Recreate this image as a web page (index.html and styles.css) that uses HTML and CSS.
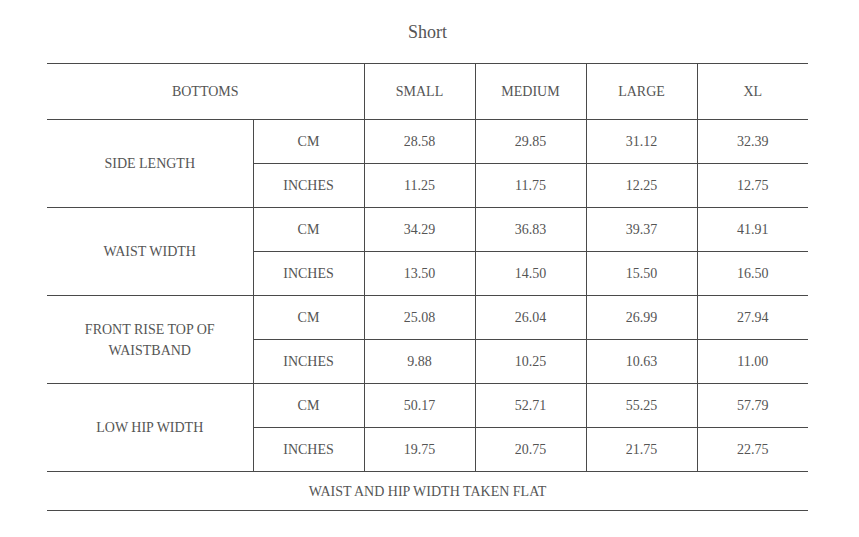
FILE: index.html
```html
<!DOCTYPE html>
<html>
<head>
<meta charset="utf-8">
<link rel="stylesheet" href="styles.css">
</head>
<body>
<div class="page">
  <div class="title">Short</div>
  <table class="chart">
    <colgroup>
      <col class="c-label"><col class="c-size"><col class="c-size"><col class="c-size"><col class="c-size"><col class="c-size">
    </colgroup>
    <tr class="head">
      <th colspan="2">BOTTOMS</th>
      <th>SMALL</th><th>MEDIUM</th><th>LARGE</th><th>XL</th>
    </tr>
    <tr><td class="label" rowspan="2">SIDE LENGTH</td><td class="unit">CM</td><td>28.58</td><td>29.85</td><td>31.12</td><td>32.39</td></tr>
    <tr><td class="unit">INCHES</td><td>11.25</td><td>11.75</td><td>12.25</td><td>12.75</td></tr>
    <tr><td class="label" rowspan="2">WAIST WIDTH</td><td class="unit">CM</td><td>34.29</td><td>36.83</td><td>39.37</td><td>41.91</td></tr>
    <tr><td class="unit">INCHES</td><td>13.50</td><td>14.50</td><td>15.50</td><td>16.50</td></tr>
    <tr><td class="label" rowspan="2">FRONT RISE TOP OF<br>WAISTBAND</td><td class="unit">CM</td><td>25.08</td><td>26.04</td><td>26.99</td><td>27.94</td></tr>
    <tr><td class="unit">INCHES</td><td>9.88</td><td>10.25</td><td>10.63</td><td>11.00</td></tr>
    <tr><td class="label" rowspan="2">LOW HIP WIDTH</td><td class="unit">CM</td><td>50.17</td><td>52.71</td><td>55.25</td><td>57.79</td></tr>
    <tr><td class="unit">INCHES</td><td>19.75</td><td>20.75</td><td>21.75</td><td>22.75</td></tr>
    <tr class="foot"><td colspan="6">WAIST AND HIP WIDTH TAKEN FLAT</td></tr>
  </table>
</div>
</body>
</html>
```

FILE: styles.css
```css
html, body {
  margin: 0;
  padding: 0;
  background: #ffffff;
}
.page {
  padding-left: 47px;
  width: 761px;
  font-family: "Liberation Serif", "Times New Roman", serif;
  color: #555555;
}
.title {
  text-align: center;
  font-size: 18px;
  line-height: 24px;
  padding-top: 20px;
  margin-bottom: 19px;
  color: #555555;
}
.chart {
  width: 761px;
  border-collapse: collapse;
  table-layout: fixed;
  border-top: 1px solid #4a4a4a;
  border-bottom: 1px solid #4a4a4a;
  border-left: hidden;
  border-right: hidden;
  font-size: 14px;
}
.c-label {
  width: 206px;
}
.c-size {
  width: 111px;
}
.chart th, .chart td {
  border: 1px solid #4a4a4a;
  text-align: center;
  vertical-align: middle;
  font-weight: normal;
  padding: 0;
  line-height: 21px;
  height: 43px;
}
.chart .head th {
  height: 55px;
}
.chart .foot td {
  height: 38px;
}
```
